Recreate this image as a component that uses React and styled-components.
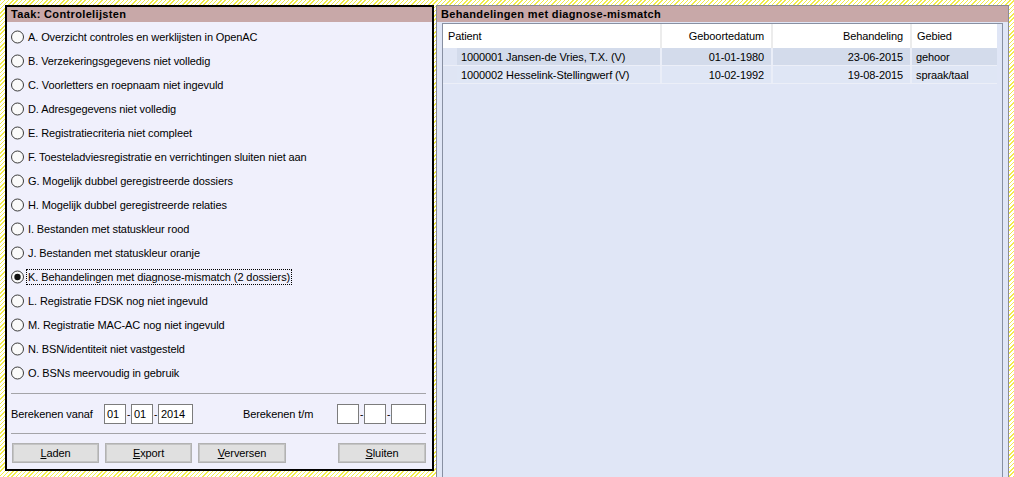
import React from "react";
import styled, { createGlobalStyle } from "styled-components";

const GlobalStyle = createGlobalStyle`
  html, body {
    margin: 0;
    padding: 0;
  }
  body {
    background-color: #fff;
    background-image: repeating-linear-gradient(
      135deg,
      #f2ec4a 0px,
      #f2ec4a 1px,
      #ffffff 1px,
      #ffffff 3px
    );
    font-family: "Liberation Sans", Arial, sans-serif;
    font-size: 11px;
    letter-spacing: -0.1px;
    color: #000;
  }
`;

const Page = styled.div`
  display: flex;
  align-items: flex-start;
  gap: 2px;
  height: 477px;
  padding: 5px 5px 0 5px;
  box-sizing: border-box;
  overflow: hidden;
`;

const TaskPanel = styled.div`
  width: 429px;
  border: 2px solid #000;
  background: #f0f0fc;
  box-sizing: border-box;
  display: flex;
  flex-direction: column;
`;

const PanelHeader = styled.div`
  height: ${(p) => p.$height || 15}px;
  line-height: ${(p) => p.$height || 15}px;
  background: #c8a8a8;
  font-weight: bold;
  letter-spacing: 0.35px;
  padding-left: 4px;
  white-space: nowrap;
`;

const OptionList = styled.div`
  padding-top: 3px;
  display: flex;
  flex-direction: column;
`;

const OptionRow = styled.label`
  height: 24px;
  display: flex;
  align-items: center;
  padding-left: 4px;
  white-space: nowrap;
`;

const OptionText = styled.span`
  margin-left: 1px;
  padding: 0 1px;
  line-height: 14px;
  border: 1px dotted ${(p) => (p.$focused ? "#000" : "transparent")};
`;

const Separator = styled.div`
  height: 1px;
  background: #a4a4a8;
  margin: ${(p) => p.$top}px 6px 0 4px;
`;

const DateRow = styled.div`
  display: flex;
  align-items: center;
  height: 20px;
  margin-top: 10px;
  padding-left: 4px;
`;

const FieldLabel = styled.span`
  width: ${(p) => p.$width}px;
  margin-left: ${(p) => p.$offset || 0}px;
  white-space: nowrap;
`;

const DateGroup = styled.div`
  display: flex;
  align-items: center;
`;

const DateInput = styled.div`
  width: ${(p) => p.$width}px;
  height: 20px;
  box-sizing: border-box;
  border: 1px solid #7c7c7c;
  background: #fff;
  padding-left: 2px;
  line-height: 18px;
`;

const Dash = styled.span`
  width: 5px;
  text-align: center;
  font-size: 10px;
`;

const ButtonRow = styled.div`
  display: flex;
  gap: 6px;
  margin-top: 9px;
  padding: 0 6px 6px 5px;
`;

const Button = styled.button`
  width: ${(p) => p.$width}px;
  height: 20px;
  margin-left: ${(p) => (p.$pushRight ? "auto" : "0")};
  box-sizing: border-box;
  border: 1px solid #b2b2b2;
  box-shadow: inset 0 0 0 1px #c4c4c4;
  background: #e0e0e0;
  font-family: inherit;
  font-size: 11px;
  letter-spacing: -0.1px;
  color: #000;
  padding: 0;
`;

const ResultPanel = styled.div`
  flex: 1;
  height: 472px;
  border: 1px solid #8a8a98;
  border-bottom: none;
  background: #e0e6f6;
  box-sizing: border-box;
  display: flex;
  flex-direction: column;
`;

const GridFrame = styled.div`
  flex: 1;
  margin: 1px 5px 0 5px;
  border: 1px solid #8890a2;
  border-bottom: none;
  background: #e0e6f6;
  display: flex;
  flex-direction: column;
`;

const cols = "217px 111px 139px 87px";

const HeaderRow = styled.div`
  display: grid;
  grid-template-columns: ${cols};
  width: 554px;
  height: 24px;
  background: #fff;
`;

const HeaderCell = styled.div`
  display: flex;
  align-items: center;
  justify-content: ${(p) => (p.$right ? "flex-end" : "flex-start")};
  padding: ${(p) => (p.$right ? "0 7px 0 0" : "0 0 0 5px")};
  border-left: ${(p) => (p.$first ? "none" : "2px solid #ececec")};
  white-space: nowrap;
`;

const DataRow = styled.div`
  display: grid;
  grid-template-columns: ${cols};
  width: 554px;
  height: 17px;
  background: ${(p) => p.$bg};
  border-bottom: 1px solid #eceff8;
`;

const DataCell = styled.div`
  display: flex;
  align-items: center;
  justify-content: ${(p) => (p.$right ? "flex-end" : "flex-start")};
  padding: ${(p) => (p.$right ? "0 7px 0 0" : "0 0 0 4px")};
  border-left: ${(p) => (p.$first ? "none" : "2px solid #eaeef8")};
  white-space: nowrap;
`;

const Indent = styled.span`
  align-self: stretch;
  width: 14px;
  margin: 0 4px 0 -4px;
  background: #dfe5f4;
`;

const Radio = ({ checked }) => (
  <svg width="14" height="14" viewBox="0 0 14 14">
    <circle cx="6.5" cy="7" r="6" fill="#fafafa" stroke="#3c3c3c" strokeWidth="1" />
    {checked && <circle cx="6.5" cy="7" r="3.2" fill="#111" />}
  </svg>
);

const options = [
  "A. Overzicht controles en werklijsten in OpenAC",
  "B. Verzekeringsgegevens niet volledig",
  "C. Voorletters en roepnaam niet ingevuld",
  "D. Adresgegevens niet volledig",
  "E. Registratiecriteria niet compleet",
  "F. Toesteladviesregistratie en verrichtingen sluiten niet aan",
  "G. Mogelijk dubbel geregistreerde dossiers",
  "H. Mogelijk dubbel geregistreerde relaties",
  "I. Bestanden met statuskleur rood",
  "J. Bestanden met statuskleur oranje",
  "K. Behandelingen met diagnose-mismatch (2 dossiers)",
  "L. Registratie FDSK nog niet ingevuld",
  "M. Registratie MAC-AC nog niet ingevuld",
  "N. BSN/identiteit niet vastgesteld",
  "O. BSNs meervoudig in gebruik",
];

const rows = [
  { patient: "1000001 Jansen-de Vries, T.X. (V)", born: "01-01-1980", treat: "23-06-2015", area: "gehoor", bg: "#d3dbeb" },
  { patient: "1000002 Hesselink-Stellingwerf (V)", born: "10-02-1992", treat: "19-08-2015", area: "spraak/taal", bg: "#dfe6f5" },
];

const DateFields = ({ values }) => (
  <DateGroup>
    <DateInput $width={22}>{values[0]}</DateInput>
    <Dash>-</Dash>
    <DateInput $width={22}>{values[1]}</DateInput>
    <Dash>-</Dash>
    <DateInput $width={35}>{values[2]}</DateInput>
  </DateGroup>
);

const App = () => {
  const selected = 10;
  return (
    <>
      <GlobalStyle />
      <Page>
        <TaskPanel>
          <PanelHeader>Taak: Controlelijsten</PanelHeader>
          <OptionList>
            {options.map((o, i) => (
              <OptionRow key={o}>
                <Radio checked={i === selected} />
                <OptionText $focused={i === selected}>{o}</OptionText>
              </OptionRow>
            ))}
          </OptionList>
          <Separator $top={8} />
          <DateRow>
            <FieldLabel $width={93}>Berekenen vanaf</FieldLabel>
            <DateFields values={["01", "01", "2014"]} />
            <FieldLabel $width={94} $offset={50}>
              Berekenen t/m
            </FieldLabel>
            <DateFields values={["", "", ""]} />
          </DateRow>
          <Separator $top={9} />
          <ButtonRow>
            <Button $width={87}>
              <u>L</u>aden
            </Button>
            <Button $width={87}>
              <u>E</u>xport
            </Button>
            <Button $width={88}>
              <u>V</u>erversen
            </Button>
            <Button $width={88} $pushRight>
              <u>S</u>luiten
            </Button>
          </ButtonRow>
        </TaskPanel>

        <ResultPanel>
          <PanelHeader $height={16}>Behandelingen met diagnose-mismatch</PanelHeader>
          <GridFrame>
            <HeaderRow>
              <HeaderCell $first>Patient</HeaderCell>
              <HeaderCell $right>Geboortedatum</HeaderCell>
              <HeaderCell $right>Behandeling</HeaderCell>
              <HeaderCell>Gebied</HeaderCell>
            </HeaderRow>
            {rows.map((r) => (
              <DataRow key={r.patient} $bg={r.bg}>
                <DataCell $first>
                  <Indent />
                  {r.patient}
                </DataCell>
                <DataCell $right>{r.born}</DataCell>
                <DataCell $right>{r.treat}</DataCell>
                <DataCell>{r.area}</DataCell>
              </DataRow>
            ))}
          </GridFrame>
        </ResultPanel>
      </Page>
    </>
  );
};

export default App;
